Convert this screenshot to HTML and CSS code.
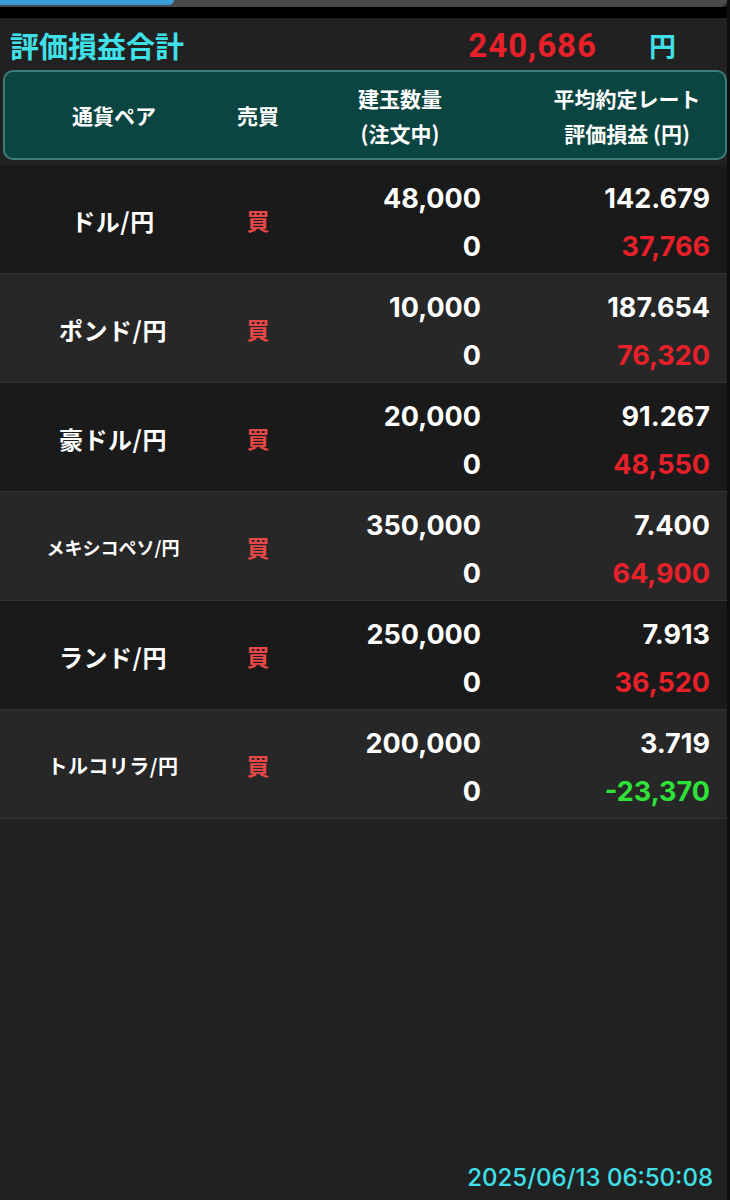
FILE: index.html
```html
<!DOCTYPE html>
<html lang="ja">
<head>
    <meta charset="UTF-8" />
    <meta name="viewport" content="width=device-width, initial-scale=1.0"/>
    <title>建玉照会</title>
    <link rel="stylesheet" href="styles.css">
</head>
<body>
<div class="screen">
    <!-- 上部タブ（切れて見えている部分） -->
    <div class="tabs">
        <div class="tab-active"></div>
    </div>
    <div class="gap-band"></div>

    <!-- 評価損益合計 -->
    <div class="summary">
        <div class="summary-label">評価損益合計</div>
        <div class="summary-value">240,686</div>
        <div class="summary-unit">円</div>
    </div>

    <!-- 見出し -->
    <div class="head">
        <div class="head-cell">通貨ペア</div>
        <div class="head-cell">売買</div>
        <div class="head-cell two">
            <span>建玉数量</span>
            <span>(注文中)</span>
        </div>
        <div class="head-cell two last">
            <span>平均約定レート</span>
            <span>評価損益 (円)</span>
        </div>
    </div>

    <!-- 建玉一覧 -->
    <div class="rows">
        <div class="row">
            <div class="pair">ドル/円</div>
            <div class="side">買</div>
            <div class="num"><span>48,000</span><span>0</span></div>
            <div class="num"><span>142.679</span><span class="plus">37,766</span></div>
        </div>
        <div class="row">
            <div class="pair">ポンド/円</div>
            <div class="side">買</div>
            <div class="num"><span>10,000</span><span>0</span></div>
            <div class="num"><span>187.654</span><span class="plus">76,320</span></div>
        </div>
        <div class="row">
            <div class="pair">豪ドル/円</div>
            <div class="side">買</div>
            <div class="num"><span>20,000</span><span>0</span></div>
            <div class="num"><span>91.267</span><span class="plus">48,550</span></div>
        </div>
        <div class="row">
            <div class="pair xs">メキシコペソ/円</div>
            <div class="side">買</div>
            <div class="num"><span>350,000</span><span>0</span></div>
            <div class="num"><span>7.400</span><span class="plus">64,900</span></div>
        </div>
        <div class="row">
            <div class="pair">ランド/円</div>
            <div class="side">買</div>
            <div class="num"><span>250,000</span><span>0</span></div>
            <div class="num"><span>7.913</span><span class="plus">36,520</span></div>
        </div>
        <div class="row">
            <div class="pair sm">トルコリラ/円</div>
            <div class="side">買</div>
            <div class="num"><span>200,000</span><span>0</span></div>
            <div class="num"><span>3.719</span><span class="minus">-23,370</span></div>
        </div>
    </div>

    <div class="updated">2025/06/13 06:50:08</div>
</div>
</body>
</html>
```

FILE: styles.css
```css
body {
    margin: 0;
    background: #0e0e0e;
    font-family: "Inter", "Noto Sans CJK JP", sans-serif;
}
.screen {
    width: 727px;
    min-height: 1200px;
    background: #212121;
    display: flex;
    flex-direction: column;
}
.tabs {
    height: 7px;
    background: #4a4a4c;
    border-radius: 0 0 10px 0;
    padding-bottom: 2px;
    box-sizing: border-box;
    display: flex;
}
.tab-active {
    width: 174px;
    background: #3a9fd6;
    border-radius: 0 0 8px 0;
}
.gap-band {
    height: 11px;
    background: #000;
}
.summary {
    height: 52px;
    display: flex;
    align-items: center;
    padding: 2px 0 0 10px;
    box-sizing: border-box;
}
.summary-label {
    font-family: "Noto Sans CJK JP", sans-serif;
    font-size: 29px;
    font-weight: bold;
    color: #3fe0e8;
    flex: 1;
}
.summary-value {
    font-family: "Roboto", sans-serif;
    font-size: 33px;
    font-weight: bold;
    letter-spacing: 1px;
    color: #e8202a;
}
.summary-unit {
    font-family: "Noto Sans CJK JP", sans-serif;
    font-size: 27px;
    font-weight: bold;
    color: #3fe0e8;
    margin: 0 51px 0 52px;
}
.head {
    margin: 0 0 5px 3px;
    height: 90px;
    box-sizing: border-box;
    background: #0b4541;
    border: 2px solid #3f7d7b;
    border-radius: 10px;
    display: grid;
    grid-template-columns: 218px 70px 214px 1fr;
    align-items: center;
    color: #fff;
    font-family: "Noto Sans CJK JP", sans-serif;
    font-size: 21px;
    font-weight: bold;
}
.head-cell {
    text-align: center;
}
.head-cell.two {
    display: flex;
    flex-direction: column;
    gap: 9px;
    line-height: 26px;
}
.head-cell.last {
    padding-left: 22px;
}
.row {
    height: 108px;
    border-bottom: 1px solid #333;
    display: grid;
    grid-template-columns: 226px 64px 191px 229px;
    align-items: center;
    background: #1a1a1a;
}
.row:nth-child(even) {
    background: #272727;
}
.pair {
    text-align: center;
    color: #fff;
    font-family: "Noto Sans CJK JP", sans-serif;
    font-size: 24px;
    font-weight: bold;
    letter-spacing: 0.5px;
    padding-top: 2px;
}
.pair.sm {
    font-size: 20px;
}
.pair.xs {
    font-size: 18px;
    letter-spacing: 0;
}
.side {
    text-align: center;
    color: #e64848;
    font-family: "Noto Sans CJK JP", sans-serif;
    font-size: 23px;
    font-weight: bold;
    padding-top: 2px;
}
.num {
    display: flex;
    flex-direction: column;
    align-items: flex-end;
    gap: 14px;
    padding-top: 8px;
    color: #fff;
    font-size: 27px;
    font-weight: bold;
    line-height: 34px;
}
.plus {
    color: #e8202a;
}
.minus {
    color: #2ee23a;
}
.updated {
    margin-top: auto;
    align-self: flex-end;
    padding: 0 14px 8px 0;
    color: #3fe0e8;
    font-size: 24px;
    font-weight: 500;
}
```
